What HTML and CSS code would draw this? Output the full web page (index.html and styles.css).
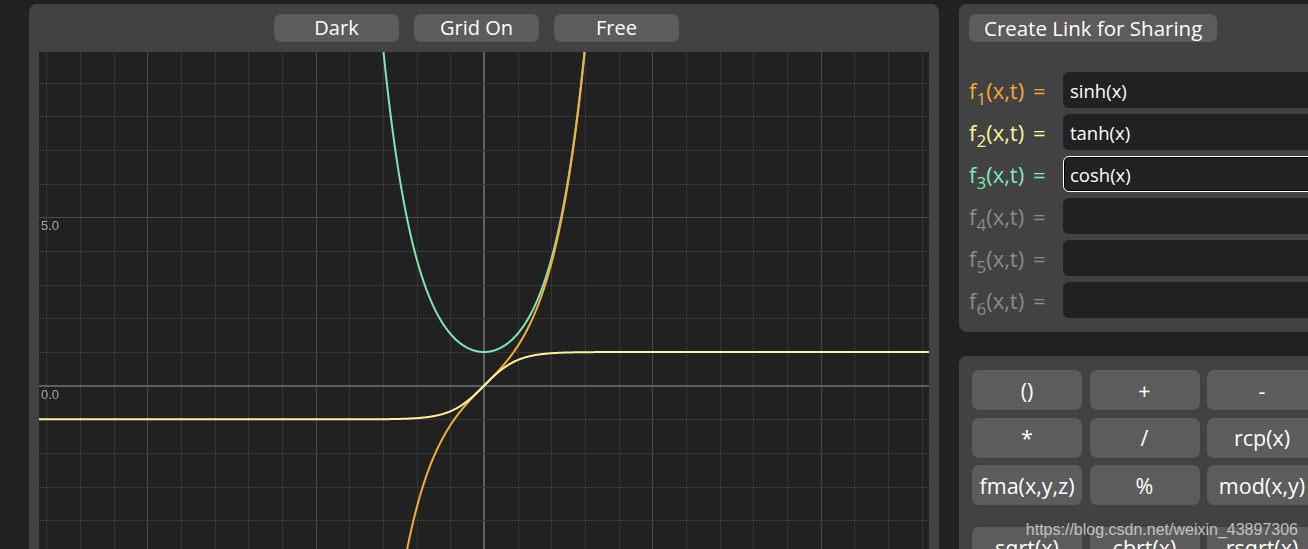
FILE: index.html
```html
<!DOCTYPE html>
<html lang="en">
<head>
  <meta charset="UTF-8">
  <meta name="viewport" content="width=device-width, initial-scale=1.0">
  <title>Function Plotter</title>
  <link rel="stylesheet" href="styles.css">
</head>
<body>
  <div class="app">
    <section class="plot-panel">
      <div class="toolbar">
        <button class="btn">Dark</button>
        <button class="btn">Grid On</button>
        <button class="btn">Free</button>
      </div>
      <canvas id="plot" width="890" height="520"></canvas>
    </section>

    <aside class="side">
      <section class="panel funcs">
        <button class="btn share">Create Link for Sharing</button>
        <div class="func-list">
          <div class="func f1"><label>f<sub>1</sub>(x,t) =</label><input type="text" value="sinh(x)"></div>
          <div class="func f2"><label>f<sub>2</sub>(x,t) =</label><input type="text" value="tanh(x)"></div>
          <div class="func f3"><label>f<sub>3</sub>(x,t) =</label><input type="text" value="cosh(x)" class="active"></div>
          <div class="func off"><label>f<sub>4</sub>(x,t) =</label><input type="text" value=""></div>
          <div class="func off"><label>f<sub>5</sub>(x,t) =</label><input type="text" value=""></div>
          <div class="func off"><label>f<sub>6</sub>(x,t) =</label><input type="text" value=""></div>
        </div>
      </section>

      <section class="panel keypad">
        <div class="keys">
          <button class="key">()</button>
          <button class="key">+</button>
          <button class="key">-</button>
          <button class="key">*</button>
          <button class="key">/</button>
          <button class="key">rcp(x)</button>
          <button class="key">fma(x,y,z)</button>
          <button class="key">%</button>
          <button class="key">mod(x,y)</button>
        </div>
        <div class="keys">
          <button class="key">sqrt(x)</button>
          <button class="key">cbrt(x)</button>
          <button class="key">rsqrt(x)</button>
        </div>
      </section>
    </aside>
  </div>

  <div class="watermark">https://blog.csdn.net/weixin_43897306</div>

  <script src="plot.js"></script>
</body>
</html>
```

FILE: styles.css
```css
:root {
  --bg: #212121;
  --panel: #424242;
  --button: #5c5c5c;
  --text: #ffffff;
  --f1: #f3a93a;
  --f2: #fdf29e;
  --f3: #84e7b6;
  --off: #8a8a8a;
}
body {
  margin: 0;
  background: var(--bg);
  color: var(--text);
  font-family: "Open Sans", "Noto Sans", sans-serif;
  overflow: hidden;
  height: 549px;
}
.app {
  display: flex;
  gap: 20px;
  padding: 4px 0 0 29px;
}
.btn, .key {
  background: var(--button);
  color: var(--text);
  border: none;
  border-radius: 7px;
  font-family: inherit;
  font-size: 20px;
  padding: 0;
  cursor: pointer;
}
.plot-panel {
  flex-shrink: 0;
  width: 890px;
  padding: 10px 10px 0;
  background: var(--panel);
  border-radius: 8px 8px 0 0;
}
.toolbar {
  display: flex;
  justify-content: center;
  gap: 15px;
  padding-right: 15px;
  margin-bottom: 10px;
}
.toolbar .btn { width: 125px; height: 28px; line-height: 28px; }
#plot { display: block; }

.side {
  flex-shrink: 0;
  width: 400px;
}
.panel {
  background: var(--panel);
  border-radius: 8px 0 0 8px;
}
.funcs { padding: 10px 0 14px 10px; }
.share { height: 28px; padding: 0 15px; line-height: 28px; font-size: 20.5px; }
.func-list {
  display: flex;
  flex-direction: column;
  gap: 6px;
  margin-top: 30px;
}
.func { display: flex; align-items: center; }
.func label {
  width: 94px;
  flex-shrink: 0;
  font-size: 22px;
  word-spacing: 3px;
  white-space: nowrap;
}
.func sub { font-size: 17px; vertical-align: -6px; line-height: 0; }
.f1 label { color: var(--f1); }
.f2 label { color: var(--f2); }
.f3 label { color: var(--f3); }
.off label { color: var(--off); }
.func input {
  flex: 1;
  height: 36px;
  box-sizing: border-box;
  background: var(--bg);
  color: var(--text);
  border: 1px solid transparent;
  border-radius: 6px;
  padding: 0 6px;
  font-family: inherit;
  font-size: 18.5px;
  outline: none;
}
.func input.active {
  border-color: #ffffff;
  box-shadow: inset 0 0 0 1px #000;
}

.keypad {
  margin-top: 24px;
  padding: 14px 0 20px 13px;
}
.keys {
  display: grid;
  grid-template-columns: repeat(3, 110px);
  grid-auto-rows: 40px;
  column-gap: 7.5px;
  row-gap: 7.5px;
}
.keys + .keys { margin-top: 22px; }
.key { font-size: 21.5px; }

.watermark {
  position: absolute;
  right: 10px;
  bottom: 10px;
  font-family: "Liberation Sans", Arial, sans-serif;
  font-size: 16px;
  color: rgba(230, 230, 230, 0.75);
  pointer-events: none;
}
```

FILE: plot.js
```js
const canvas = document.getElementById('plot');
const ctx = canvas.getContext('2d');
const W = canvas.width, H = canvas.height;
const ox = 445, oy = 333.7, unit = 33.67;

ctx.fillStyle = '#212121';
ctx.fillRect(0, 0, W, H);

// grid
function gridColor(k) {
  if (k === 0) return '#5f5f5f';
  if (k % 5 === 0) return '#4a4a4a';
  return '#363636';
}

for (let k = -14; k <= 14; k++) {
  const x = Math.round(ox + k * unit);
  if (x < 0 || x > W) continue;
  ctx.strokeStyle = gridColor(k);
  ctx.lineWidth = k === 0 ? 2 : 1;
  const px = k === 0 ? x : x + 0.5;
  ctx.beginPath();
  ctx.moveTo(px, 0);
  ctx.lineTo(px, H);
  ctx.stroke();
}
for (let k = -14; k <= 14; k++) {
  const y = Math.round(oy - k * unit);
  if (y < 0 || y > H) continue;
  ctx.strokeStyle = gridColor(k);
  ctx.lineWidth = k === 0 ? 2 : 1;
  const py = k === 0 ? y : y + 0.5;
  ctx.beginPath();
  ctx.moveTo(0, py);
  ctx.lineTo(W, py);
  ctx.stroke();
}

// labels on the left edge
ctx.fillStyle = '#a6a6a6';
ctx.font = '13px "Liberation Sans", Arial, sans-serif';
ctx.textBaseline = 'top';
[5, 0, -5].forEach(v => {
  ctx.fillText(v.toFixed(1), 2, oy - v * unit + 3);
});

// curves
function plot(f, color) {
  ctx.strokeStyle = color;
  ctx.lineWidth = 2;
  ctx.beginPath();
  let started = false;
  for (let px = 0; px <= W; px += 0.5) {
    const x = (px - ox) / unit;
    const y = oy - f(x) * unit;
    if (y < -50 || y > H + 50) { started = false; continue; }
    if (!started) { ctx.moveTo(px, y); started = true; }
    else ctx.lineTo(px, y);
  }
  ctx.stroke();
}

plot(Math.cosh, '#7fe6b1');
plot(Math.sinh, '#f6ad35');
plot(Math.tanh, '#fdf29e');
```
